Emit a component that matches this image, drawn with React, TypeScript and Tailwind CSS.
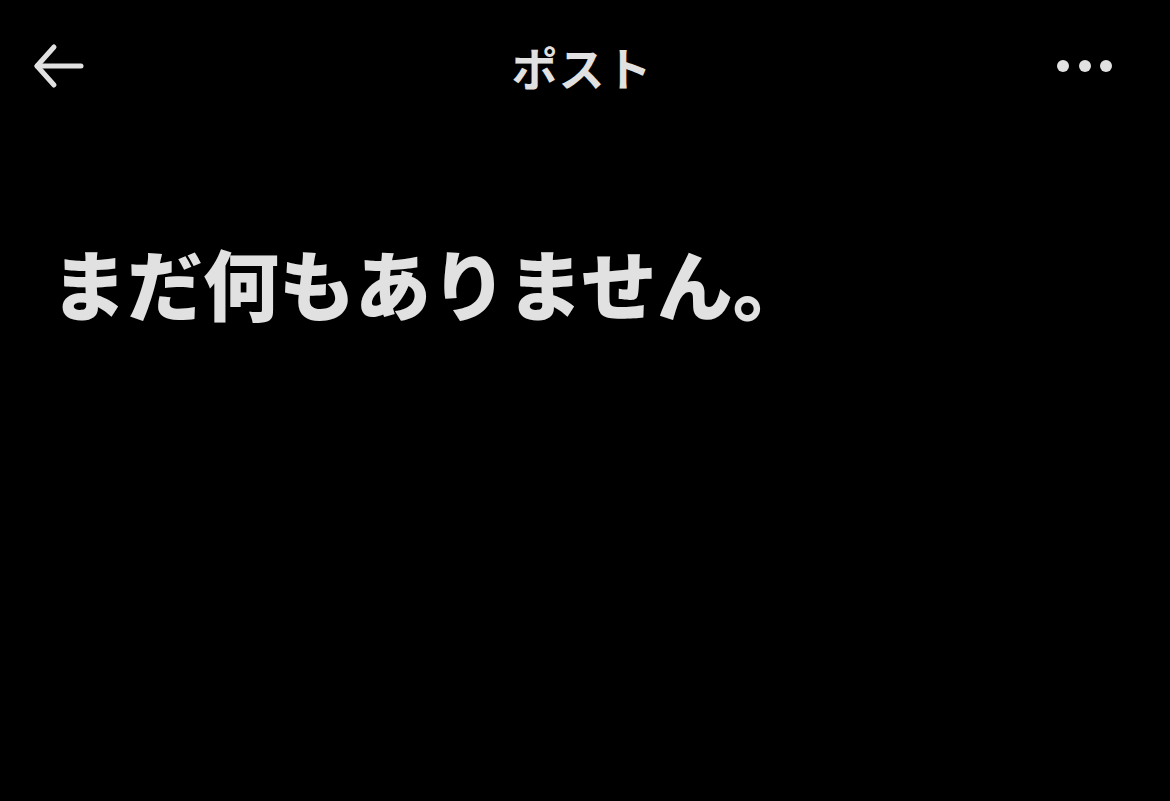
export default function App() {
  return (
    <div
      className="w-[1170px] h-[801px] bg-black text-[#e1e1e1] overflow-hidden"
      style={{ fontFamily: '"Noto Sans CJK JP", "Noto Sans", sans-serif' }}
    >
      <header className="h-[132px] grid grid-cols-[1fr_auto_1fr] items-center px-[33px]">
        <button className="w-[52px] h-[48px] flex items-center">
          <svg width="52" height="46" viewBox="0 0 52 46" fill="none" stroke="#e1e1e1" strokeWidth="5" strokeLinecap="round" strokeLinejoin="round">
            <path d="M48 23H4" />
            <path d="M21 4L4 23L21 42" />
          </svg>
        </button>
        <h1 className="text-[46px] font-bold leading-none tracking-[1px] mr-[6px]">ポスト</h1>
        <div className="flex items-center justify-end gap-[9.5px] pr-[25px]">
          <span className="shrink-0 w-[12px] h-[12px] rounded-full bg-[#e1e1e1]" />
          <span className="shrink-0 w-[12px] h-[12px] rounded-full bg-[#e1e1e1]" />
          <span className="shrink-0 w-[12px] h-[12px] rounded-full bg-[#e1e1e1]" />
        </div>
      </header>
      <main className="pl-[51px] pt-[112px]">
        <p className="text-[76px] font-black leading-none">まだ何もありません。</p>
      </main>
    </div>
  );
}
